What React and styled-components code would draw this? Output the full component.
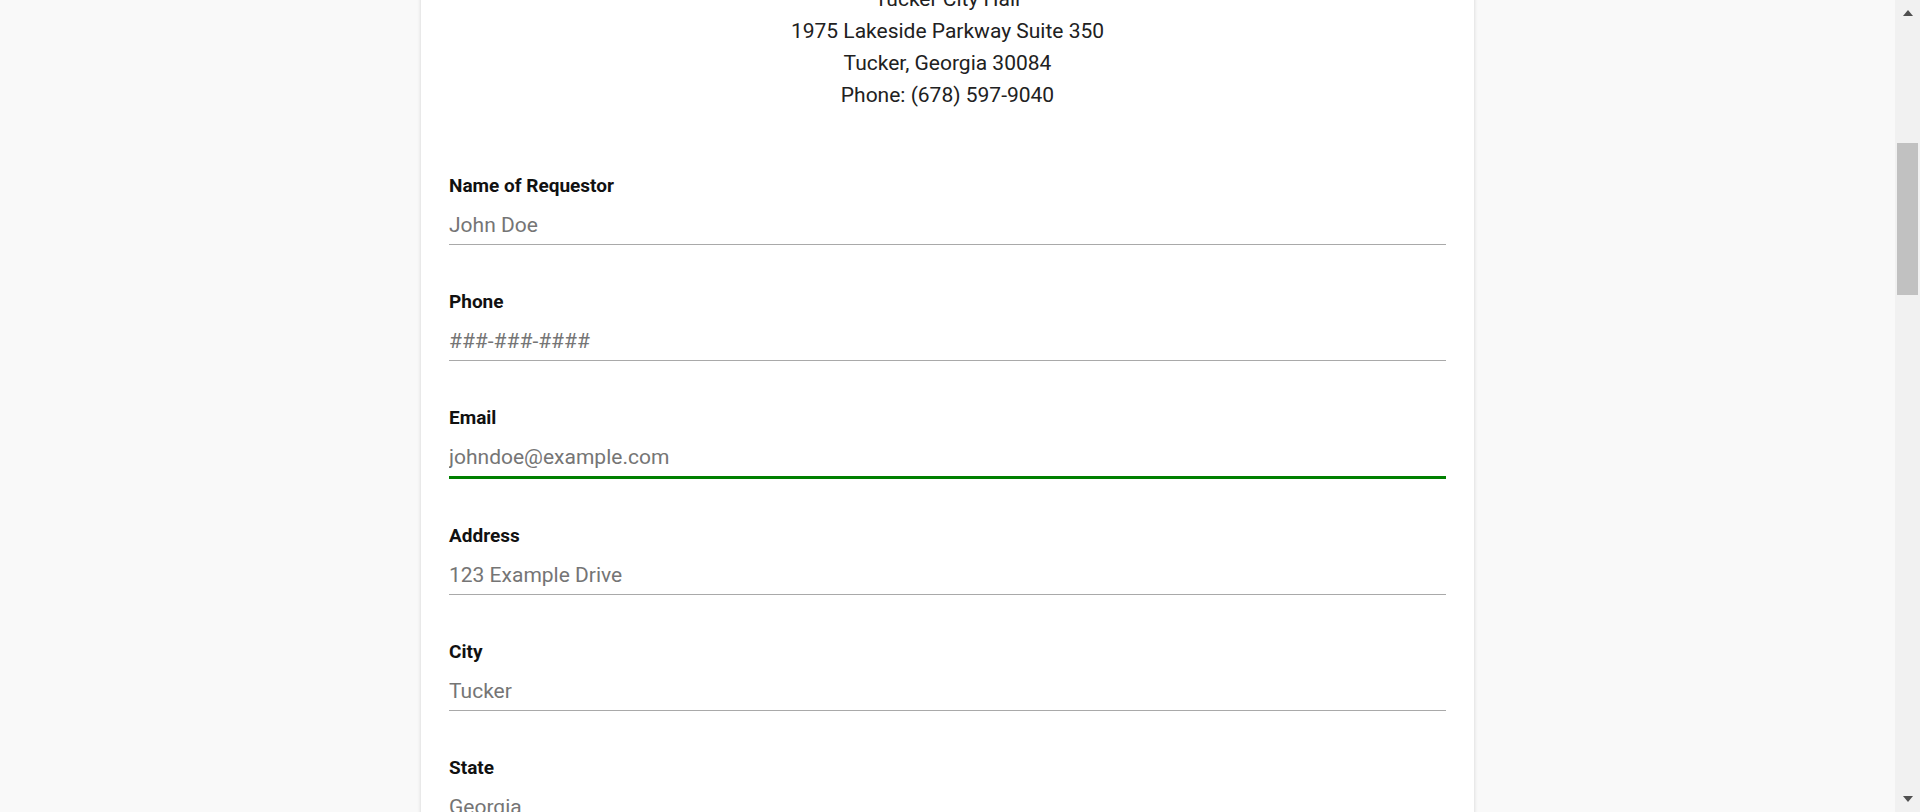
import React, { useLayoutEffect, useRef } from 'react';
import styled, { createGlobalStyle } from 'styled-components';

const GlobalStyle = createGlobalStyle`
  html, body {
    margin: 0;
    height: 100%;
    overflow: hidden;
  }
  body {
    font-family: Roboto, "Liberation Sans", Arial, sans-serif;
    background: #f9f9f9;
  }
  #root {
    height: 100%;
  }
`;

const fields = [
  { label: 'Name of Requestor', placeholder: 'John Doe' },
  { label: 'Phone', placeholder: '###-###-####' },
  { label: 'Email', placeholder: 'johndoe@example.com', active: true },
  { label: 'Address', placeholder: '123 Example Drive' },
  { label: 'City', placeholder: 'Tucker' },
  { label: 'State', placeholder: 'Georgia' },
  { label: 'Zip Code', placeholder: '30084' },
];

function App() {
  const viewRef = useRef(null);
  const addrRef = useRef(null);

  // the page is shown scrolled down to the address block
  useLayoutEffect(() => {
    const v = viewRef.current;
    const a = addrRef.current;
    v.scrollTop += a.getBoundingClientRect().top - v.getBoundingClientRect().top + 17.2;
  }, []);

  return (
    <Shell>
      <GlobalStyle />
      <Viewport ref={viewRef}>
        <Page>
          <Card>
            <Title>Open Records Request</Title>
            <Intro>
              Please complete the form below to request public records from the City of Tucker.
              Requests may also be delivered in person or by mail to:
            </Intro>

            <AddressBlock ref={addrRef}>
              <AddressLine>Tucker City Hall</AddressLine>
              <AddressLine>1975 Lakeside Parkway Suite 350</AddressLine>
              <AddressLine>Tucker, Georgia 30084</AddressLine>
              <AddressLine>Phone: (678) 597-9040</AddressLine>
            </AddressBlock>

            <Form onSubmit={(e) => e.preventDefault()}>
              {fields.map((f) => (
                <Field key={f.label}>
                  <Label>{f.label}</Label>
                  <Input placeholder={f.placeholder} $active={f.active} />
                </Field>
              ))}
              <Field>
                <Label>Records Requested</Label>
                <TextArea placeholder="Describe the records you are requesting" />
              </Field>
              <SubmitButton type="submit">Submit Request</SubmitButton>
            </Form>
          </Card>
        </Page>
      </Viewport>

      <ScrollBar>
        <ArrowButton>
          <Triangle />
        </ArrowButton>
        <Track>
          <Thumb />
        </Track>
        <ArrowButton $down>
          <Triangle $down />
        </ArrowButton>
      </ScrollBar>
    </Shell>
  );
}

export default App;

const Shell = styled.div`
  display: flex;
  height: 100vh;
`;

const Viewport = styled.div`
  flex: 1;
  overflow-y: auto;
  scrollbar-width: none;

  &::-webkit-scrollbar {
    display: none;
  }
`;

const Page = styled.div`
  display: flex;
  justify-content: center;
  padding-bottom: 40px;
`;

const Card = styled.div`
  width: 1053px;
  box-sizing: border-box;
  background: #fff;
  box-shadow: 0 0 4px rgba(0, 0, 0, 0.16);
  padding: 48px 28px 64px;
`;

const Title = styled.h1`
  margin: 0 0 24px;
  font-size: 34px;
  font-weight: 500;
  color: #1b5e20;
  text-align: center;
`;

const Intro = styled.p`
  margin: 0 0 24px;
  font-size: 21px;
  line-height: 32px;
  color: #212121;
  text-align: center;
`;

const AddressBlock = styled.div`
  text-align: center;
  margin-bottom: 63.3px;
`;

const AddressLine = styled.p`
  margin: 0;
  font-size: 21px;
  line-height: 32px;
  color: #212121;
`;

const Form = styled.form`
  display: flex;
  flex-direction: column;
`;

const Field = styled.div`
  display: flex;
  flex-direction: column;
  gap: 10px;
  margin-bottom: 45px;
`;

const Label = styled.label`
  font-size: 19px;
  line-height: 23px;
  font-weight: 700;
  color: #111;
`;

const Input = styled.input`
  height: 35px;
  box-sizing: content-box;
  padding: 0 0 2px;
  border: none;
  border-bottom: ${(p) => (p.$active ? '3px solid #008000' : '1px solid #a9a9a9')};
  outline: none;
  background: transparent;
  font-family: inherit;
  font-size: 21px;
  color: #212121;

  &::placeholder {
    color: #757575;
  }
`;

const TextArea = styled.textarea`
  height: 120px;
  padding: 0;
  border: none;
  border-bottom: 1px solid #a9a9a9;
  outline: none;
  resize: none;
  font-family: inherit;
  font-size: 21px;

  &::placeholder {
    color: #757575;
  }
`;

const SubmitButton = styled.button`
  align-self: flex-start;
  padding: 12px 32px;
  border: none;
  border-radius: 4px;
  background: #008000;
  color: #fff;
  font-family: inherit;
  font-size: 19px;
  font-weight: 500;
`;

const ScrollBar = styled.div`
  width: 25px;
  flex-shrink: 0;
  display: flex;
  flex-direction: column;
  background: #f1f1f1;
`;

const ArrowButton = styled.div`
  height: 25px;
  display: flex;
  justify-content: center;
  align-items: flex-start;
  padding-top: ${(p) => (p.$down ? '9px' : '10px')};
  box-sizing: border-box;
`;

const Triangle = styled.div`
  width: 0;
  height: 0;
  border-left: 5.5px solid transparent;
  border-right: 5.5px solid transparent;
  ${(p) => (p.$down ? 'border-top: 6px solid #505050;' : 'border-bottom: 6px solid #505050;')}
`;

const Track = styled.div`
  flex: 1;
  display: flex;
  flex-direction: column;
`;

const Thumb = styled.div`
  margin: 118px 2px 0;
  height: 152px;
  background: #c1c1c1;
`;
